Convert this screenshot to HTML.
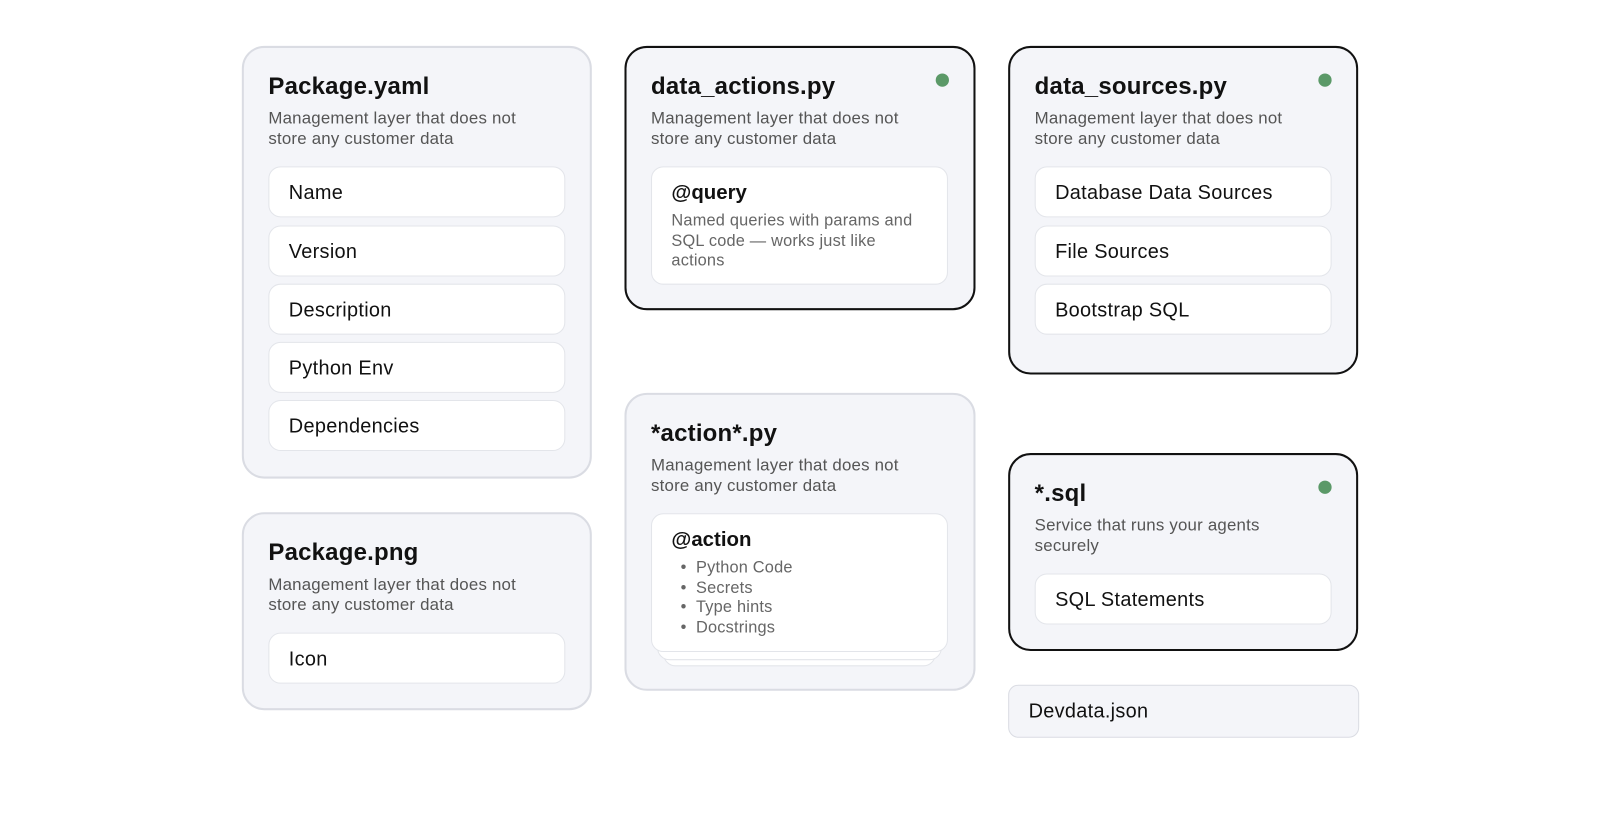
<!DOCTYPE html>
<html><head><style>
body{margin:0;width:1600px;height:812px;background:#fff;font-family:"Liberation Sans",sans-serif;position:relative;overflow:hidden}
#w{position:absolute;left:0;top:0;width:1600px;height:812px;transform:scale(1.0204);transform-origin:0 0}
.c{position:absolute;box-sizing:border-box;background:#f4f5f9;border:2px solid #dadce3;border-radius:22px}
.d{border:2px solid #111}
.t{position:absolute;left:24px;top:24px;font-size:23.5px;font-weight:bold;color:#111;letter-spacing:0.2px}
.s{position:absolute;left:24px;font-size:16.5px;line-height:20px;color:#555;letter-spacing:0.2px}
.i{position:absolute;left:24px;width:291px;height:50px;box-sizing:border-box;background:#fff;border:1px solid #e3e5ea;border-radius:12px;font-size:19.5px;line-height:50px;padding-left:19px;color:#111;letter-spacing:0.3px}
.dot{position:absolute;right:24px;top:25px;width:13px;height:13px;border-radius:50%;background:#5b9968}
.b{position:absolute;left:24px;width:291px;box-sizing:border-box;background:#fff;border:1px solid #e3e5ea;border-radius:12px}
</style></head><body><div id="w">

<div class="c" style="left:237px;top:45px;width:343px;height:424px">
<div class="t">Package.yaml</div>
<div class="s" style="top:59px">Management layer that does not<br>store any customer data</div>
<div class="i" style="top:116px">Name</div>
<div class="i" style="top:174px">Version</div>
<div class="i" style="top:231px">Description</div>
<div class="i" style="top:288px">Python Env</div>
<div class="i" style="top:345px">Dependencies</div>
</div>

<div class="c" style="left:237px;top:502px;width:343px;height:194px">
<div class="t">Package.png</div>
<div class="s" style="top:59px">Management layer that does not<br>store any customer data</div>
<div class="i" style="top:116px">Icon</div>
</div>

<div class="c d" style="left:612px;top:45px;width:344px;height:259px">
<div class="dot"></div>
<div class="t">data_actions.py</div>
<div class="s" style="top:59px">Management layer that does not<br>store any customer data</div>
<div class="b" style="top:116px;height:116px">
<div style="position:absolute;left:19px;top:14px;font-size:20px;font-weight:bold;color:#111">@query</div>
<div style="position:absolute;left:19px;top:43px;font-size:16px;line-height:19.5px;color:#666;letter-spacing:0.2px">Named queries with params and<br>SQL code — works just like<br>actions</div>
</div>
</div>

<div class="c" style="left:612px;top:385px;width:344px;height:292px">
<div class="t">*action*.py</div>
<div class="s" style="top:59px">Management layer that does not<br>store any customer data</div>
<div class="b" style="top:152px;height:114px;left:36px;width:267px"></div>
<div class="b" style="top:146px;height:114px;left:30px;width:279px"></div>
<div class="b" style="top:116px;height:136px">
<div style="position:absolute;left:19px;top:14px;font-size:20px;font-weight:bold;color:#111">@action</div>
<div style="position:absolute;left:28px;top:43px;font-size:16px;line-height:19.5px;color:#666;letter-spacing:0.2px">• &nbsp;Python Code<br>• &nbsp;Secrets<br>• &nbsp;Type hints<br>• &nbsp;Docstrings</div>
</div>
</div>

<div class="c d" style="left:988px;top:45px;width:343px;height:322px">
<div class="dot"></div>
<div class="t">data_sources.py</div>
<div class="s" style="top:59px">Management layer that does not<br>store any customer data</div>
<div class="i" style="top:116px">Database Data Sources</div>
<div class="i" style="top:174px">File Sources</div>
<div class="i" style="top:231px">Bootstrap SQL</div>
</div>

<div class="c d" style="left:988px;top:444px;width:343px;height:194px">
<div class="dot"></div>
<div class="t">*.sql</div>
<div class="s" style="top:59px">Service that runs your agents<br>securely</div>
<div class="i" style="top:116px">SQL Statements</div>
</div>

<div class="c" style="left:988px;top:671px;width:344px;height:52px;border-radius:10px;border-width:1px;font-size:19.5px;line-height:50px;padding-left:19px;color:#111;letter-spacing:0.3px">Devdata.json</div>

</div></body></html>
